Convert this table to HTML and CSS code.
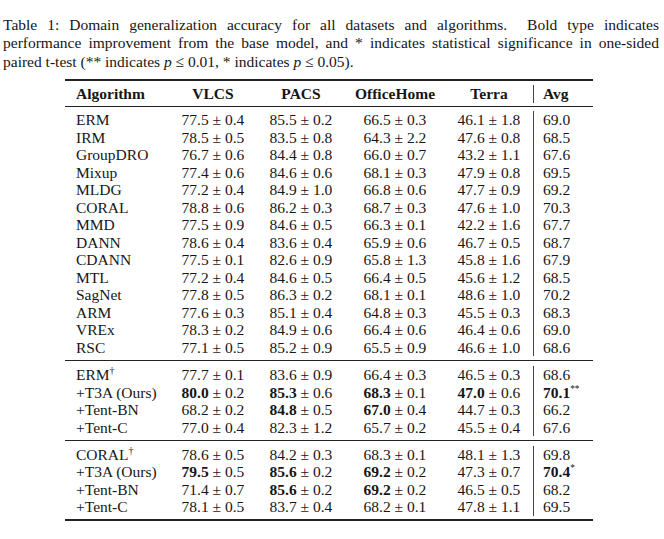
FILE: index.html
```html
<!DOCTYPE html>
<html>
<head>
<meta charset="utf-8">
<link rel="stylesheet" href="styles.css">
</head>
<body>
<div class="page">
  <p class="caption">
    <span class="cl just">Table 1: Domain generalization accuracy for all datasets and algorithms. &nbsp;Bold type indicates</span>
    <span class="cl just">performance improvement from the base model, and * indicates statistical significance in one-sided</span>
    <span class="cl">paired t-test (** indicates <i>p</i> ≤ 0.01, * indicates <i>p</i> ≤ 0.05).</span>
  </p>
  <div class="tbl">
    <div class="rule heavy top"></div>
    <div class="sec head">
      <div class="row">
        <div class="c alg">Algorithm</div><div class="c">VLCS</div><div class="c">PACS</div><div class="c">OfficeHome</div><div class="c">Terra</div><div class="c avg">Avg</div>
      </div>
    </div>
    <div class="rule"></div>
    <div class="sec">
      <div class="row"><div class="c alg">ERM</div><div class="c">77.5 ± 0.4</div><div class="c">85.5 ± 0.2</div><div class="c">66.5 ± 0.3</div><div class="c">46.1 ± 1.8</div><div class="c avg">69.0</div></div>
      <div class="row"><div class="c alg">IRM</div><div class="c">78.5 ± 0.5</div><div class="c">83.5 ± 0.8</div><div class="c">64.3 ± 2.2</div><div class="c">47.6 ± 0.8</div><div class="c avg">68.5</div></div>
      <div class="row"><div class="c alg">GroupDRO</div><div class="c">76.7 ± 0.6</div><div class="c">84.4 ± 0.8</div><div class="c">66.0 ± 0.7</div><div class="c">43.2 ± 1.1</div><div class="c avg">67.6</div></div>
      <div class="row"><div class="c alg">Mixup</div><div class="c">77.4 ± 0.6</div><div class="c">84.6 ± 0.6</div><div class="c">68.1 ± 0.3</div><div class="c">47.9 ± 0.8</div><div class="c avg">69.5</div></div>
      <div class="row"><div class="c alg">MLDG</div><div class="c">77.2 ± 0.4</div><div class="c">84.9 ± 1.0</div><div class="c">66.8 ± 0.6</div><div class="c">47.7 ± 0.9</div><div class="c avg">69.2</div></div>
      <div class="row"><div class="c alg">CORAL</div><div class="c">78.8 ± 0.6</div><div class="c">86.2 ± 0.3</div><div class="c">68.7 ± 0.3</div><div class="c">47.6 ± 1.0</div><div class="c avg">70.3</div></div>
      <div class="row"><div class="c alg">MMD</div><div class="c">77.5 ± 0.9</div><div class="c">84.6 ± 0.5</div><div class="c">66.3 ± 0.1</div><div class="c">42.2 ± 1.6</div><div class="c avg">67.7</div></div>
      <div class="row"><div class="c alg">DANN</div><div class="c">78.6 ± 0.4</div><div class="c">83.6 ± 0.4</div><div class="c">65.9 ± 0.6</div><div class="c">46.7 ± 0.5</div><div class="c avg">68.7</div></div>
      <div class="row"><div class="c alg">CDANN</div><div class="c">77.5 ± 0.1</div><div class="c">82.6 ± 0.9</div><div class="c">65.8 ± 1.3</div><div class="c">45.8 ± 1.6</div><div class="c avg">67.9</div></div>
      <div class="row"><div class="c alg">MTL</div><div class="c">77.2 ± 0.4</div><div class="c">84.6 ± 0.5</div><div class="c">66.4 ± 0.5</div><div class="c">45.6 ± 1.2</div><div class="c avg">68.5</div></div>
      <div class="row"><div class="c alg">SagNet</div><div class="c">77.8 ± 0.5</div><div class="c">86.3 ± 0.2</div><div class="c">68.1 ± 0.1</div><div class="c">48.6 ± 1.0</div><div class="c avg">70.2</div></div>
      <div class="row"><div class="c alg">ARM</div><div class="c">77.6 ± 0.3</div><div class="c">85.1 ± 0.4</div><div class="c">64.8 ± 0.3</div><div class="c">45.5 ± 0.3</div><div class="c avg">68.3</div></div>
      <div class="row"><div class="c alg">VREx</div><div class="c">78.3 ± 0.2</div><div class="c">84.9 ± 0.6</div><div class="c">66.4 ± 0.6</div><div class="c">46.4 ± 0.6</div><div class="c avg">69.0</div></div>
      <div class="row"><div class="c alg">RSC</div><div class="c">77.1 ± 0.5</div><div class="c">85.2 ± 0.9</div><div class="c">65.5 ± 0.9</div><div class="c">46.6 ± 1.0</div><div class="c avg">68.6</div></div>
    </div>
    <div class="rule grp"></div>
    <div class="sec">
      <div class="row"><div class="c alg">ERM<sup>†</sup></div><div class="c">77.7 ± 0.1</div><div class="c">83.6 ± 0.9</div><div class="c">66.4 ± 0.3</div><div class="c">46.5 ± 0.3</div><div class="c avg">68.6</div></div>
      <div class="row"><div class="c alg">+T3A (Ours)</div><div class="c"><b>80.0</b> ± 0.2</div><div class="c"><b>85.3</b> ± 0.6</div><div class="c"><b>68.3</b> ± 0.1</div><div class="c"><b>47.0</b> ± 0.6</div><div class="c avg"><b>70.1</b><sup class="st">**</sup></div></div>
      <div class="row"><div class="c alg">+Tent-BN</div><div class="c">68.2 ± 0.2</div><div class="c"><b>84.8</b> ± 0.5</div><div class="c"><b>67.0</b> ± 0.4</div><div class="c">44.7 ± 0.3</div><div class="c avg">66.2</div></div>
      <div class="row"><div class="c alg">+Tent-C</div><div class="c">77.0 ± 0.4</div><div class="c">82.3 ± 1.2</div><div class="c">65.7 ± 0.2</div><div class="c">45.5 ± 0.4</div><div class="c avg">67.6</div></div>
    </div>
    <div class="rule grp"></div>
    <div class="sec">
      <div class="row"><div class="c alg">CORAL<sup>†</sup></div><div class="c">78.6 ± 0.5</div><div class="c">84.2 ± 0.3</div><div class="c">68.3 ± 0.1</div><div class="c">48.1 ± 1.3</div><div class="c avg">69.8</div></div>
      <div class="row"><div class="c alg">+T3A (Ours)</div><div class="c"><b>79.5</b> ± 0.5</div><div class="c"><b>85.6</b> ± 0.2</div><div class="c"><b>69.2</b> ± 0.2</div><div class="c">47.3 ± 0.7</div><div class="c avg"><b>70.4</b><sup class="st">*</sup></div></div>
      <div class="row"><div class="c alg">+Tent-BN</div><div class="c">71.4 ± 0.7</div><div class="c"><b>85.6</b> ± 0.2</div><div class="c"><b>69.2</b> ± 0.2</div><div class="c">46.5 ± 0.5</div><div class="c avg">68.2</div></div>
      <div class="row"><div class="c alg">+Tent-C</div><div class="c">78.1 ± 0.5</div><div class="c">83.7 ± 0.4</div><div class="c">68.2 ± 0.1</div><div class="c">47.8 ± 1.1</div><div class="c avg">69.5</div></div>
    </div>
    <div class="rule heavy"></div>
  </div>
</div>
</body>
</html>
```

FILE: styles.css
```css
html, body {
  margin: 0;
  padding: 0;
  background: #ffffff;
}
.page {
  width: 664px;
  height: 539px;
  overflow: hidden;
  font-family: "Liberation Serif", "Times New Roman", serif;
  font-size: 15.5px;
  color: #161616;
}
.caption {
  margin: 0;
  padding: 16px 5px 0 3px;
  font-size: 15.5px;
  line-height: 18.3px;
}
.cl {
  display: block;
  white-space: nowrap;
}
.cl.just {
  white-space: normal;
  text-align: justify;
  text-align-last: justify;
}
.tbl {
  margin: 8px 0 0 65px;
  width: 528px;
}
.rule {
  height: 1px;
  background: #222;
  margin: 3.3px 0 4.3px;
}
.rule.grp {
  margin: 3.8px 0 5px;
}
.rule.heavy {
  height: 2px;
}
.rule.top {
  margin-top: 0;
}
.row {
  display: grid;
  grid-template-columns: 104px 88px 88px 100px 88px 60px;
  line-height: 17.5px;
  height: 17.5px;
  white-space: nowrap;
}
.c {
  text-align: center;
}
.c.alg {
  text-align: left;
  padding-left: 11px;
}
.c.avg {
  text-align: left;
  padding-left: 9px;
  border-left: 1px solid #444;
}
.head .c {
  font-weight: bold;
}
b {
  font-weight: bold;
}
sup {
  font-size: 0.65em;
  line-height: 0;
  vertical-align: 0.55em;
}
sup.st {
  font-size: 0.6em;
  vertical-align: 0.6em;
}
```
